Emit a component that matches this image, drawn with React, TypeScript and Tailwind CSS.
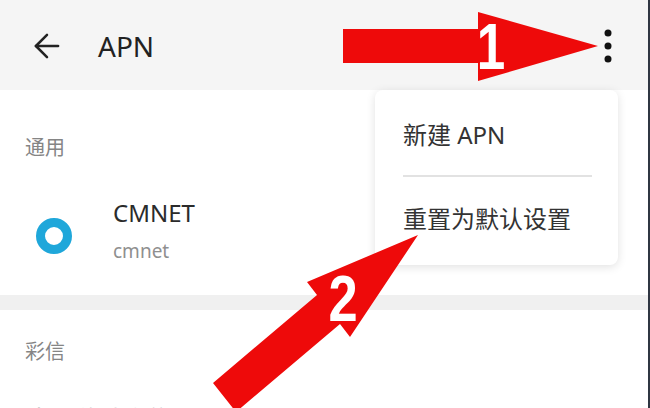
import { ArrowLeft } from 'lucide-react';

const font = { fontFamily: '"Noto Sans", "Noto Sans CJK SC", sans-serif' };

function MoreDots() {
  return (
    <svg width="8" height="34" viewBox="0 0 8 34">
      <circle cx="4" cy="4" r="3.5" fill="#111" />
      <circle cx="4" cy="17" r="3.5" fill="#111" />
      <circle cx="4" cy="30" r="3.5" fill="#111" />
    </svg>
  );
}

function Arrows() {
  return (
    <svg className="absolute inset-0 pointer-events-none" width="650" height="408" viewBox="0 0 650 408">
      {/* arrow 1 -> menu button */}
      <polygon points="343,29 478,29 478,12 598,46 478,81 478,63 343,63" fill="#ee0a0a" />
      <text
        x="491"
        y="69"
        textAnchor="middle"
        fill="#fff"
        fontSize="64"
        fontWeight="bold"
        fontFamily='"Liberation Sans", sans-serif'
        transform="translate(491 0) scale(0.8 1) translate(-491 0)"
      >
        1
      </text>
      {/* arrow 2 -> reset item */}
      <polygon points="418,235 350,337 340,324 236,412 213,383 317,295 307,282" fill="#ee0a0a" />
      <text
        x="343"
        y="321"
        textAnchor="middle"
        fill="#fff"
        fontSize="64"
        fontWeight="bold"
        fontFamily='"Liberation Sans", sans-serif'
        transform="translate(343 0) scale(0.82 1) translate(-343 0)"
      >
        2
      </text>
    </svg>
  );
}

export default function App() {
  return (
    <div className="relative w-[650px] h-[408px] overflow-hidden bg-white border-r-2 border-[#2f3642]" style={font}>
      {/* Header */}
      <div className="h-[90px] bg-[#f5f5f5] flex items-center justify-between">
        <div className="flex items-center pt-[2px]">
          <ArrowLeft className="ml-[28px] w-[38px] h-[38px] text-[#222]" strokeWidth={1.6} />
          <span className="ml-[32px] text-[28px] leading-[32px] text-[#222]">APN</span>
        </div>
        <div className="mr-[36px] pt-[2px]">
          <MoreDots />
        </div>
      </div>

      {/* 通用 */}
      <div className="pt-[47px] pl-[25px] text-[20px] leading-[22px] text-[#858585]">通用</div>
      <div className="flex mt-[40px] pb-[32px]">
        <div className="w-[113px] shrink-0">
          <div className="ml-[36px] mt-[19px] w-[36px] h-[36px] rounded-full border-[9px] border-[#1fa7da]" />
        </div>
        <div className="flex flex-col">
          <span className="text-[24px] leading-[28px] text-[#2b2b2b]">CMNET</span>
          <span className="mt-[12px] text-[19px] leading-[24px] text-[#8f8f8f]">cmnet</span>
        </div>
      </div>

      <div className="h-[15px] bg-[#f0f0f0]" />

      {/* 彩信 */}
      <div className="pt-[31px] pl-[25px] text-[20px] leading-[22px] text-[#858585]">彩信</div>
      <div className="mt-[42px] pl-[27px] text-[24px] leading-[28px] text-[#aaaaaa]">中国移动彩信</div>

      {/* Overflow menu */}
      <div className="absolute left-[375px] top-[90px] w-[243px] h-[175px] bg-white rounded-lg shadow-[0_2px_10px_rgba(0,0,0,0.12)] pt-[31px] pl-[28px] pr-[26px]">
        <div className="text-[24px] leading-[28px] text-[#333]">新建 APN</div>
        <div className="mt-[26px] h-[2px] bg-[#e2e2e2]" />
        <div className="mt-[28px] text-[24px] leading-[28px] text-[#333]">重置为默认设置</div>
      </div>

      <Arrows />
    </div>
  );
}
